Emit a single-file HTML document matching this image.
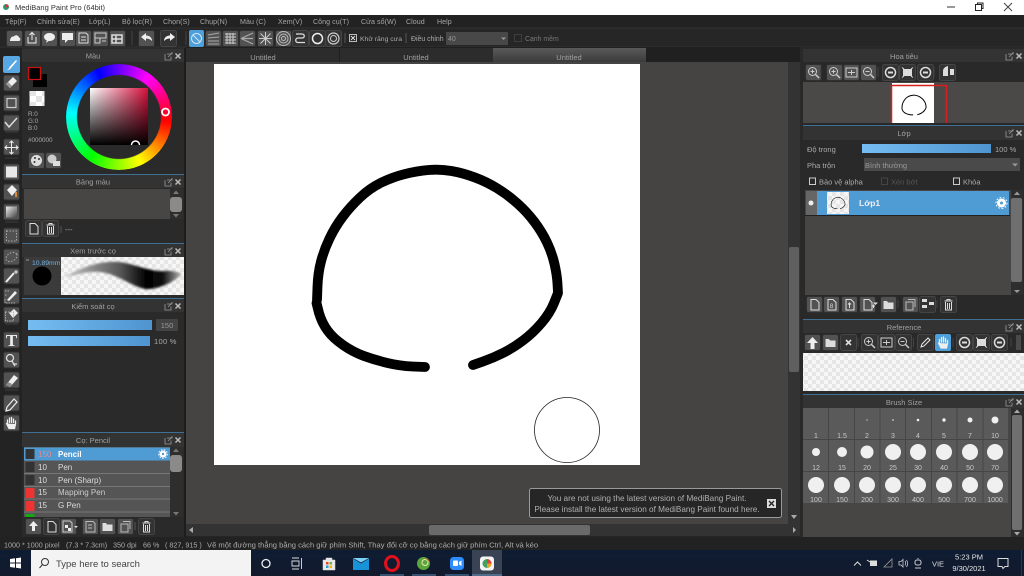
<!DOCTYPE html>
<html><head><meta charset="utf-8"><title>MediBang Paint Pro</title>
<style>
html,body{margin:0;padding:0;background:#222;width:1024px;height:576px;overflow:hidden}
#root{position:absolute;left:0;top:0;width:1024px;height:576px;overflow:hidden;filter:blur(.3px)}
svg{position:absolute;left:0;top:0;display:block}
text{font-family:"Liberation Sans","Noto Sans CJK SC",sans-serif;font-size:7.5px;fill:#aaa}
.h{text-anchor:middle;fill:#a0a0a0}
.m{font-size:7.1px;fill:#a5a5a5;letter-spacing:.05px}
.n{font-size:7px;fill:#c8c8c8;text-anchor:middle}
.wheel{position:absolute;left:66px;top:64px;width:106px;height:106px;border-radius:50%;background:conic-gradient(from 95deg,#f00,#ff0,#0f0,#0ff,#00f,#f0f,#f00);-webkit-mask:radial-gradient(circle,transparent 41.5px,#000 42.5px);mask:radial-gradient(circle,transparent 41.5px,#000 42.5px)}
.sv{position:absolute;left:90px;top:88px;width:58px;height:57px;background:linear-gradient(to top,#000,rgba(0,0,0,0)),linear-gradient(to right,#fff,#d8103c)}
.over{position:absolute;left:0;top:0;width:1024px;height:576px}
</style></head><body><div id="root">
<svg width="1024" height="576" viewBox="0 0 1024 576" xmlns="http://www.w3.org/2000/svg">
<defs>
<pattern id="ck" width="12" height="12" patternUnits="userSpaceOnUse"><rect width="12" height="12" fill="#fff"/><rect width="6" height="6" fill="#e4e4e4"/><rect x="6" y="6" width="6" height="6" fill="#e4e4e4"/></pattern>
<pattern id="ck2" width="8" height="8" patternUnits="userSpaceOnUse"><rect width="8" height="8" fill="#f6f6f6"/><rect width="4" height="4" fill="#e6e6e6"/><rect x="4" y="4" width="4" height="4" fill="#e6e6e6"/></pattern>
<linearGradient id="sl" x1="0" x2="1" y1="0" y2="0"><stop offset="0" stop-color="#74bdf2"/><stop offset="1" stop-color="#4f94cf"/></linearGradient>
<linearGradient id="tab" x1="0" x2="0" y1="0" y2="1"><stop offset="0" stop-color="#5a5a5a"/><stop offset="1" stop-color="#3b3b3b"/></linearGradient>
<linearGradient id="tb" x1="0" x2="0" y1="0" y2="1"><stop offset="0" stop-color="#0e1c33"/><stop offset="1" stop-color="#121a2c"/></linearGradient>
<linearGradient id="gr" x1="0" x2="1" y1="0" y2="1"><stop offset="0" stop-color="#eee"/><stop offset="1" stop-color="#444"/></linearGradient>
<linearGradient id="st" x1="0" x2="1" y1="0" y2="0"><stop offset="0" stop-color="#ccc"/><stop offset=".25" stop-color="#888"/><stop offset=".48" stop-color="#555"/><stop offset=".7" stop-color="#000"/><stop offset=".84" stop-color="#111"/><stop offset="1" stop-color="#bbb"/></linearGradient>
<filter id="bl"><feGaussianBlur stdDeviation="1"/></filter>
<path id="curve" fill="none" stroke="#000" stroke-linecap="round" stroke-linejoin="round" stroke-width="9.8" d="M425 367L412.500 366.500Q400 366 387.500 363Q375 360 364 356Q353 352 343 345Q333 338 327.500 330.500Q322 323 319 313L316.500 303M317 300L317.500 286.500Q318 273 321 261.500Q324 250 329.500 238.500Q335 227 342.500 217Q350 207 360 197.500Q370 188 381.500 182.500Q393 177 405 174Q417 171 428.500 170Q440 169 451.500 171Q463 173 475 177.500Q487 182 497.500 188.500Q508 195 517.500 203.500Q527 212 534.500 222Q542 232 547 242.500Q552 253 554.500 264Q557 275 557.500 284L558 293L554 303Q550 313 541.500 323Q533 333 523 340.500Q513 348 503 353Q493 358 483 361.500L473 365"/>
<g id="b"><rect x=".5" y=".5" width="16" height="16" rx="2" fill="#525252" stroke="#2f2f2f"/></g>
<g id="bd"><rect x=".5" y=".5" width="16" height="16" rx="2" fill="#333" stroke="#454545"/></g>
<g id="hdr"><path d="M1 2V8H7V4.500M3 2H8V0M4 5L8 1" fill="none" stroke="#999" stroke-width=".8"/><path d="M11.500 1.500L16.500 6.500M16.500 1.500L11.500 6.500" stroke="#bbb" stroke-width="1.500"/></g>
<g id="newp"><path d="M5 3.500H10L13 6.500V14H5Z" fill="none" stroke="#ddd"/></g>
<g id="trash"><path d="M4.500 5H12.500M7 5V3.500H10V5M5.500 6V14H11.500V6M7.500 7V13M9.500 7V13" fill="none" stroke="#ddd"/></g>
<g id="folder"><path d="M3.500 5H7L8 6.500H13.500V13H3.500Z" fill="#ddd"/></g>
<g id="copy"><path d="M6 3.500H13V11M4 6H11V14H4Z" fill="none" stroke="#bbb"/></g>
<g id="zi"><circle cx="7.500" cy="7.500" r="4" fill="none" stroke="#ccc"/><path d="M10.500 10.500L14 14" stroke="#ccc" stroke-width="1.500"/><path d="M5.500 7.500H9.500M7.500 5.500V9.500" stroke="#ccc"/></g>
<g id="zo"><circle cx="7.500" cy="7.500" r="4" fill="none" stroke="#ccc"/><path d="M10.500 10.500L14 14" stroke="#ccc" stroke-width="1.500"/><path d="M5.500 7.500H9.500" stroke="#ccc"/></g>
<g id="fit"><rect x="3" y="4" width="11" height="9" fill="none" stroke="#ccc"/><path d="M5 8.500H12M8.500 6V11" stroke="#ccc"/></g>
<g id="rot"><circle cx="8.500" cy="8.500" r="5" fill="none" stroke="#ddd" stroke-width="1.500"/><path d="M6 8.500H11" stroke="#ddd" stroke-width="2"/></g>
<g id="flip"><rect x="4" y="5" width="9" height="7" fill="#ddd"/><path d="M3 3.500L5 5M14 3.500L12 5M3 13.500L5 12M14 13.500L12 12" stroke="#ddd"/></g>
<g id="hand"><path d="M5 9V5.500M7 8V3.500M9 8V3M11 8V4.500M13 9.500V6.500M4 9L6.500 14H12L13 9.500" stroke="#eee" fill="#eee" stroke-width="1.300" stroke-linecap="round"/></g>
</defs>

<!-- base -->
<rect width="1024" height="576" fill="#252525"/>
<rect width="1024" height="15" fill="#fff"/>
<rect y="15" width="1024" height="13" fill="#222"/>
<rect y="28" width="1024" height="19" fill="#262626"/>
<path d="M0 28H1024M0 47H1024" stroke="#333"/>

<!-- title -->
<circle cx="6" cy="7" r="3" fill="#2b9a6a"/><circle cx="7" cy="6" r="1.500" fill="#d33"/>
<text x="15" y="10" style="font-size:7.500px;fill:#333">MediBang Paint Pro (64bit)</text>
<path d="M947 7H955" stroke="#333"/>
<path d="M975.500 4.500H981.500V10.500H975.500ZM977.500 4.500V3H983V8.500H981.500" fill="#fff" stroke="#222"/>
<path d="M1004 3L1012 11M1012 3L1004 11" stroke="#444"/>

<!-- menu -->
<text class="m" x="5" y="24">Tệp(F)</text><text class="m" x="37" y="24">Chỉnh sửa(E)</text><text class="m" x="89" y="24">Lớp(L)</text><text class="m" x="122" y="24">Bộ lọc(R)</text><text class="m" x="163" y="24">Chọn(S)</text><text class="m" x="200" y="24">Chụp(N)</text><text class="m" x="240" y="24">Màu (C)</text><text class="m" x="278" y="24">Xem(V)</text><text class="m" x="313" y="24">Công cụ(T)</text><text class="m" x="361" y="24">Cửa sổ(W)</text><text class="m" x="406" y="24">Cloud</text><text class="m" x="437" y="24">Help</text>

<!-- toolbar -->
<g>
<use href="#b" x="6" y="30"/><path d="M10 41H19C20.500 41 21 38 19 37.500C18.500 35 15 34.500 14 36.500C12 36 10 38 10 41Z" fill="#eee"/>
<use href="#b" x="24" y="30"/><path d="M28 37V43H36V37M32 40V33M29.500 35L32 32.500L34.500 35" fill="none" stroke="#eee"/>
<use href="#b" x="41" y="30"/><ellipse cx="49.500" cy="37" rx="5.500" ry="4" fill="#eee"/><path d="M47 40L46 43L50 40Z" fill="#eee"/>
<use href="#b" x="59" y="30"/><rect x="62" y="33" width="11" height="7" fill="#eee"/><path d="M65 40V43L68 40Z" fill="#eee"/>
<use href="#b" x="75" y="30"/><path d="M79 33H86L88 35V43H79ZM81 37H86M81 40H86" fill="none" stroke="#ddd"/>
<use href="#b" x="92" y="30"/><path d="M95 33H106V38H95ZM95 38V43H100V38M102 41H106" fill="none" stroke="#ccc"/>
<use href="#b" x="109" y="30"/><path d="M112 35H122V43H112ZM116 35V43M112 39H122" fill="none" stroke="#ddd" stroke-width="1.500"/>
<path d="M132 31V45" stroke="#444"/>
<use href="#b" x="138" y="30"/><path d="M141 37L146 33V35.500C150 35.500 152 38 152 41C150 39 148 38.500 146 38.500V41Z" fill="#eee"/>
<use href="#bd" x="160" y="30"/><path d="M175 37L170 33V35.500C166 35.500 164 38 164 41C166 39 168 38.500 170 38.500V41Z" fill="#eee"/>
<path d="M186 31V45" stroke="#444"/>
<rect x="189" y="30" width="15" height="17" rx="2" fill="#4f9fdb"/><circle cx="196.500" cy="38.500" r="5" fill="none" stroke="#cfe6f7"/><path d="M193 35L200 42" stroke="#cfe6f7"/>
<use href="#b" x="205" y="30"/><path d="M208 35L219 33M208 38L219 37M208 41L219 41M208 44L219 44" stroke="#aaa"/>
<use href="#b" x="222" y="30"/><path d="M225 34H236M225 37H236M225 40H236M225 43H236M227 33V44M230 33V44M233 33V44" stroke="#ccc"/>
<use href="#b" x="239" y="30"/><path d="M241 38.500L253 33M241 38.500L253 38.500M241 38.500L253 44" stroke="#aaa" stroke-width="1.200"/>
<use href="#b" x="257" y="30"/><path d="M259 38.500H272M265.500 32V45M260.500 33.500L270.500 43.500M270.500 33.500L260.500 43.500" stroke="#ccc"/>
<use href="#b" x="275" y="30"/><circle cx="283.500" cy="38.500" r="2" fill="none" stroke="#bbb"/><circle cx="283.500" cy="38.500" r="4.500" fill="none" stroke="#bbb"/><circle cx="283.500" cy="38.500" r="7" fill="none" stroke="#bbb"/>
<use href="#bd" x="292" y="30"/><path d="M296 34H302C305 34 305 38 302 38H298C295 38 295 42.500 298 42.500H305" fill="none" stroke="#ddd" stroke-width="1.300"/>
<use href="#bd" x="309" y="30"/><circle cx="317.500" cy="38.500" r="5" fill="none" stroke="#eee" stroke-width="1.500"/>
<use href="#bd" x="325" y="30"/><circle cx="333.500" cy="38.500" r="5.500" fill="none" stroke="#ccc" stroke-width="1.200"/><circle cx="333.500" cy="38.500" r="3" fill="none" stroke="#ccc"/>
<path d="M345 33V43" stroke="#555"/>
<rect x="349.500" y="34.500" width="7" height="7" fill="none" stroke="#bbb"/><path d="M351 36L355 40M355 36L351 40" stroke="#ddd"/>
<text x="360" y="41" style="font-size:6.800px">Khử răng cưa</text>
<path d="M406 33V43" stroke="#555"/>
<text x="411" y="41" style="font-size:6.900px">Điều chỉnh</text>
<rect x="446" y="32" width="62" height="13" fill="#484848"/><text x="448" y="41" style="fill:#999;font-size:7px">40</text><path d="M501 37.500H506L503.500 40Z" fill="#999"/>
<rect x="514.500" y="34.500" width="7" height="7" fill="none" stroke="#3e3e3e"/>
<text x="525" y="41" style="fill:#777;font-size:6.900px">Cạnh mềm</text>
</g>

<!-- tabs + canvas area -->
<rect x="186" y="47" width="614" height="15" fill="#202020"/>
<rect x="186" y="48" width="153" height="14" fill="#2c2c2c"/>
<rect x="340" y="48" width="153" height="14" fill="#2c2c2c"/>
<rect x="493" y="48" width="153" height="14" fill="url(#tab)"/>
<text class="h" x="263" y="60">Untitled</text><text class="h" x="416" y="60">Untitled</text><text class="h" x="569" y="60">Untitled</text>
<rect x="186" y="62" width="602" height="462" fill="#454443"/>
<rect x="214" y="64" width="426" height="401" fill="#fff"/>
<use href="#curve"/>
<circle cx="567" cy="430" r="32.500" fill="none" stroke="#222" stroke-width=".8"/>
<rect x="788" y="62" width="12" height="474" fill="#333"/><rect x="789" y="247" width="10" height="125" rx="2" fill="#5f5f5f"/>
<path d="M791 515H797L794 519Z" fill="#aaa"/><path d="M793 527V533L796 530Z" fill="#aaa"/>
<rect x="186" y="524" width="602" height="12" fill="#333"/><rect x="429" y="525" width="161" height="10" rx="2" fill="#6a6a6a"/>
<path d="M193 527V533L189 530Z" fill="#aaa"/>

<!-- notification -->
<rect x="529.500" y="488.500" width="252" height="29" rx="2" fill="#262626" stroke="#9a9a9a"/>
<text x="647" y="501" text-anchor="middle" style="font-size:8.200px;fill:#b0b0b0">You are not using the latest version of MediBang Paint.</text>
<text x="647" y="512" text-anchor="middle" style="font-size:8.200px;fill:#b0b0b0">Please install the latest version of MediBang Paint found here.</text>
<rect x="767" y="499" width="9" height="9" fill="#ddd"/><path d="M769 501L774 506M774 501L769 506" stroke="#222" stroke-width="1.300"/>

<!-- left tools -->
<rect x="0" y="48" width="22" height="490" fill="#232323"/>
<rect x="3" y="56" width="17" height="17" rx="2" fill="#58a6e2"/><path d="M6 70C8 70 9 69 9.500 67L16 60L17 61L11 68C10 69.500 8 70.500 6 70Z" fill="#fff"/>
<use href="#b" x="3" y="74.500"/><path d="M6 84L13 77L17 81L10 88Z" fill="#eee"/><path d="M6 84L10 88L12 86L8 82Z" fill="#999"/>
<use href="#b" x="3" y="94.500"/><rect x="7" y="98.500" width="9" height="9" fill="none" stroke="#ccc" stroke-width="1.200"/>
<use href="#b" x="3" y="114.500"/><path d="M5 122L9 127L17 118" fill="none" stroke="#ddd" stroke-width="1.500"/>
<use href="#b" x="3" y="138.500"/><path d="M11.500 141V154M5 147.500H18M9.500 143L11.500 141L13.500 143M9.500 152L11.500 154L13.500 152M7 145.500L5 147.500L7 149.500M16 145.500L18 147.500L16 149.500" fill="none" stroke="#eee"/>
<use href="#b" x="3" y="163.500"/><rect x="6" y="166.500" width="11" height="11" fill="#e8e8e8"/>
<use href="#b" x="3" y="183.500"/><path d="M7 190L12 185L17 190L12 196Z" fill="#eee"/><path d="M16 192V197" stroke="#d98a3a" stroke-width="2"/>
<use href="#b" x="3" y="203.500"/><rect x="6" y="206.500" width="11" height="11" fill="url(#gr)"/>
<use href="#b" x="3" y="227.500"/><rect x="6.500" y="231" width="10" height="10" fill="none" stroke="#aaa" stroke-dasharray="1.500 1.500"/>
<use href="#b" x="3" y="248.500"/><ellipse cx="11.500" cy="257" rx="6" ry="4" transform="rotate(-30 11.500 257)" fill="none" stroke="#aaa" stroke-dasharray="1.500 1.500"/>
<use href="#b" x="3" y="267.500"/><path d="M6 282L14 273" stroke="#eee" stroke-width="2"/><path d="M16 270V274M14 272H18" stroke="#eee"/>
<use href="#b" x="3" y="287.500"/><path d="M7 300L15 291L17 293L9 301Z" fill="#eee"/><path d="M5 291H10M5 295H7M5 299V303H15" fill="none" stroke="#aaa" stroke-dasharray="1.500 1"/>
<use href="#b" x="3" y="306.500"/><path d="M9 313L14 309L18 313L13 318Z" fill="#eee"/><rect x="5.500" y="312" width="8" height="9" fill="none" stroke="#aaa" stroke-dasharray="1.500 1"/>
<use href="#b" x="3" y="331.500"/><text x="11.500" y="346" text-anchor="middle" style="font-size:17px;font-weight:bold;fill:#f0f0f0;font-family:'Liberation Serif',serif">T</text>
<use href="#b" x="3" y="351.500"/><circle cx="10" cy="358" r="3.500" fill="none" stroke="#ddd" stroke-width="1.300"/><path d="M12 361L15 366M13 364H17" stroke="#ddd" stroke-width="1.300"/>
<use href="#b" x="3" y="371.500"/><path d="M6 385L14 375L18 378L10 387Z" fill="#eee"/><path d="M6 385L10 387L12 384L8 382Z" fill="#888"/>
<use href="#b" x="3" y="394.500"/><path d="M6 411L7 407L14 399L17 402L10 410Z" fill="none" stroke="#eee" stroke-width="1.200"/>
<use href="#b" x="3" y="414.500"/><use href="#hand" transform="translate(2.500 414.500)"/>
<path d="M5 132H18M5 158H18M5 222H18M5 324H18M5 390H18" stroke="#3c3c3c"/>

<!-- left panels -->
<rect x="22" y="48" width="162" height="490" fill="#2a2a2a"/>
<rect x="184" y="48" width="2" height="490" fill="#1d1d1d"/>
<rect x="22" y="49" width="162" height="13" fill="#333"/><text class="h" x="93" y="58.500">Màu</text><use href="#hdr" x="164" y="52"/>
<rect x="33" y="74" width="14" height="13" fill="#000"/>
<rect x="28.500" y="67.500" width="12" height="12" fill="#000" stroke="#c11" stroke-width="1.200"/>
<rect x="29.500" y="91" width="15" height="15" fill="url(#ck)"/>
<text x="28" y="116" style="font-size:6.300px">R:0</text><text x="28" y="123" style="font-size:6.300px">G:0</text><text x="28" y="130" style="font-size:6.300px">B:0</text>
<text x="28" y="142" style="font-size:6.300px">#000000</text>
<use href="#b" x="28" y="152"/><circle cx="36.500" cy="160.500" r="5.500" fill="#ddd"/><circle cx="35" cy="158" r="1" fill="#333"/><circle cx="39" cy="159" r="1" fill="#333"/><circle cx="34.500" cy="162" r="1" fill="#333"/>
<use href="#b" x="45" y="152"/><circle cx="52" cy="159" r="4.500" fill="#ccc"/><rect x="53" y="161" width="7" height="5" fill="#ddd"/>

<path d="M22 174.500H184" stroke="#3f6f92"/>
<rect x="22" y="175" width="162" height="13" fill="#333"/><text class="h" x="93" y="184.500">Bảng màu</text><use href="#hdr" x="164" y="178"/>
<rect x="24" y="189" width="146" height="30" fill="#474645"/>
<rect x="170" y="189" width="13" height="30" fill="#2e2e2e"/><path d="M176 190.500L179 194H173Z" fill="#777"/><rect x="170" y="197" width="12" height="15" rx="3" fill="#8a8a8a"/><path d="M173 214H179L176 217.500Z" fill="#777"/>
<use href="#bd" x="25" y="220"/><use href="#newp" x="25" y="220"/>
<use href="#bd" x="42" y="220"/><use href="#trash" x="42" y="220"/>
<path d="M61 226V233" stroke="#555"/><text x="65" y="232">---</text>

<path d="M22 243.500H184" stroke="#3f6f92"/>
<rect x="22" y="244" width="162" height="13" fill="#333"/><text class="h" x="93" y="253.500">Xem trước cọ</text><use href="#hdr" x="164" y="247"/>
<rect x="24" y="257" width="37" height="38" fill="#3b3b3b"/>
<path d="M26 260H29" stroke="#999"/>
<text x="32" y="265" style="fill:#6fb0e0;font-size:6.800px">10.89mm</text>
<circle cx="42" cy="276" r="9.500" fill="#000"/>
<rect x="61" y="257" width="123" height="38" fill="url(#ck2)"/>
<path d="M64 277C80 268 100 260 120 262C135 264 150 272 165 271C170 270 178 272 182 274C172 284 155 290 145 289C130 286 118 274 100 272C85 271 75 276 64 277Z" fill="url(#st)" filter="url(#bl)"/>

<path d="M22 298.500H184" stroke="#3f6f92"/>
<rect x="22" y="299" width="162" height="13" fill="#333"/><text class="h" x="93" y="309">Kiểm soát cọ</text><use href="#hdr" x="164" y="302"/>
<rect x="28" y="320" width="124" height="10" fill="url(#sl)"/>
<rect x="156" y="319" width="22" height="12" rx="1" fill="#444"/><text x="167" y="328" text-anchor="middle" style="font-size:7.500px;fill:#999">150</text>
<rect x="28" y="336" width="122" height="10" fill="url(#sl)"/>
<text x="154" y="344" style="font-size:7.500px;fill:#aaa;letter-spacing:.3px">100 %</text>

<path d="M22 432.500H184" stroke="#3f6f92"/>
<rect x="22" y="433" width="162" height="14" fill="#333"/><text class="h" x="93" y="443">Cọ: Pencil</text><use href="#hdr" x="164" y="436"/>
<rect x="24" y="447" width="146" height="70" fill="#555"/>
<rect x="24" y="447.500" width="146" height="13" fill="#4f9bd3"/>
<path d="M24 473.500H170M24 486.500H170M24 499H170M24 512H170" stroke="#777"/>
<rect x="25.500" y="449" width="9" height="10" fill="#333"/><rect x="25.500" y="462" width="9" height="10" fill="#333"/><rect x="25.500" y="475" width="9" height="10" fill="#333"/><rect x="25.500" y="488" width="9" height="10" fill="#e33"/><rect x="25.500" y="501" width="9" height="10" fill="#e33"/><rect x="25.500" y="514" width="9" height="3" fill="#1a1"/>
<text x="38" y="457" style="font-size:8px;fill:#e88">150</text><text x="58" y="457" style="font-size:8px;fill:#fff;font-weight:bold">Pencil</text>
<text x="38" y="470" style="font-size:8px;fill:#ddd">10</text><text x="58" y="470" style="font-size:8px;fill:#ddd">Pen</text>
<text x="38" y="483" style="font-size:8px;fill:#ddd">10</text><text x="58" y="483" style="font-size:8px;fill:#ddd">Pen (Sharp)</text>
<text x="38" y="495" style="font-size:8px;fill:#ddd">15</text><text x="58" y="495" style="font-size:8px;fill:#ccc">Mapping Pen</text>
<text x="38" y="508" style="font-size:8px;fill:#ddd">15</text><text x="58" y="508" style="font-size:8px;fill:#ddd">G Pen</text>
<circle cx="163" cy="454" r="3.500" fill="#fff"/><circle cx="163" cy="454" r="1.200" fill="#4f9bd3"/><circle cx="163" cy="454" r="4.300" fill="none" stroke="#fff" stroke-dasharray="1.500 1.500"/>
<rect x="170" y="447" width="13" height="70" fill="#2e2e2e"/><path d="M176 448.500L179 452H173Z" fill="#777"/><rect x="170" y="455" width="12" height="17" rx="3" fill="#8a8a8a"/><path d="M173 512H179L176 515.500Z" fill="#777"/>
<use href="#b" x="25" y="518"/><path d="M33.500 521L29 526H32V531H35V526H38Z" fill="#eee"/>
<use href="#bd" x="43" y="518"/><use href="#newp" x="43" y="518"/>
<use href="#b" x="60" y="518"/><path d="M63 521H70L72 523V532H63Z" fill="none" stroke="#ccc"/><rect x="65" y="525" width="3" height="3" fill="#eee"/><rect x="68" y="528" width="3" height="3" fill="#eee"/><path d="M74 526H78L76 528Z" fill="#ddd"/>
<use href="#b" x="82" y="518"/><path d="M86 521.500H93L95 523.500V532H86ZM88 525H92M88 528H92" fill="none" stroke="#bbb"/>
<use href="#b" x="99" y="518"/><use href="#folder" x="99" y="518"/>
<use href="#b" x="117" y="518"/><use href="#copy" x="117" y="518"/>
<path d="M135 522V530" stroke="#555"/>
<use href="#bd" x="138" y="518"/><use href="#trash" x="138" y="518"/>

<!-- status -->
<rect y="537" width="1024" height="13" fill="#222"/>
<text x="4" y="547.500" style="font-size:7.200px;fill:#aaa">1000 * 1000 pixel</text>
<text x="66" y="547.500" style="font-size:7.200px;fill:#aaa">(7.3 * 7.3cm)</text>
<text x="113" y="547.500" style="font-size:7.200px;fill:#aaa">350 dpi</text>
<text x="143" y="547.500" style="font-size:7.200px;fill:#aaa">66 %</text>
<text x="165" y="547.500" style="font-size:7.200px;fill:#aaa">( 827, 915 )</text>
<text x="207" y="547.500" style="font-size:7.600px;fill:#aaa">Vẽ một đường thẳng bằng cách giữ phím Shift, Thay đổi cỡ cọ bằng cách giữ phím Ctrl, Alt và kéo</text>

<!-- right panels -->
<rect x="800" y="47" width="224" height="490" fill="#292929"/>
<rect x="803" y="49" width="221" height="13" fill="#333"/><text class="h" x="904" y="59">Hoa tiêu</text><use href="#hdr" x="1005" y="52"/>
<use href="#b" x="805" y="64"/><use href="#zi" x="805" y="64"/>
<use href="#b" x="826" y="64"/><use href="#zi" x="826" y="64"/>
<use href="#b" x="843" y="64"/><use href="#fit" x="843" y="64"/>
<use href="#b" x="860" y="64"/><use href="#zo" x="860" y="64"/>
<use href="#bd" x="882" y="64"/><use href="#rot" x="882" y="64"/>
<use href="#bd" x="899" y="64"/><use href="#flip" x="899" y="64"/>
<use href="#bd" x="917" y="64"/><use href="#rot" x="917" y="64"/>
<use href="#bd" x="939" y="64"/><path d="M943 74V71C943 67 948 66 948 66V76H943ZM950 69H954V75H950Z" fill="#ddd"/>
<path d="M820.500 67V77M878 67V77M934 67V77" stroke="#444"/>
<rect x="803" y="82" width="221" height="41" fill="#4a4948"/>
<rect x="892" y="83" width="42" height="40" fill="#fff"/>
<path d="M892 85.500H946.500V123M891.500 85V123" fill="none" stroke="#d81e1e" stroke-width="1.500"/>
<g transform="translate(870.300 78.200) scale(.1)"><use href="#curve"/></g>

<path d="M803 125.500H1024" stroke="#3f6f92"/>
<rect x="803" y="126" width="221" height="14" fill="#333"/><text class="h" x="904" y="136">Lớp</text><use href="#hdr" x="1005" y="129"/>
<text x="807" y="152">Độ trong</text>
<rect x="862" y="144" width="129" height="9" fill="url(#sl)"/>
<text x="995" y="152" style="fill:#aaa">100 %</text>
<text x="807" y="168">Pha trộn</text>
<rect x="864" y="158" width="156" height="13" fill="#4a4a4a"/><text x="865" y="168" style="fill:#999">Bình thường</text><path d="M1012 163.500H1018L1015 166.500Z" fill="#999"/>
<rect x="809.500" y="178" width="6" height="6.500" fill="none" stroke="#ccc"/><text x="819" y="184.500">Bảo vệ alpha</text>
<rect x="881.500" y="178" width="6" height="6.500" fill="none" stroke="#444"/><text x="891" y="184.500" style="fill:#555">Xén bớt</text>
<rect x="953.500" y="178" width="6" height="6.500" fill="none" stroke="#ccc"/><text x="963" y="184.500">Khóa</text>
<rect x="805" y="190" width="206" height="105" fill="#474645"/>
<rect x="806" y="191" width="11" height="24" fill="#666"/><circle cx="811" cy="203" r="2.500" fill="#eee"/>
<rect x="817" y="191" width="192" height="24" fill="#4f9bd3"/>
<path d="M805 215.500H1010" stroke="#222"/>
<rect x="827" y="192" width="22" height="22" fill="url(#ck2)"/>
<g transform="translate(812.700 187.500) scale(.058)"><use href="#curve"/></g>
<text x="859" y="206" style="font-size:8.500px;font-weight:bold;fill:#eee">Lớp1</text>
<circle cx="1001.500" cy="203" r="4.500" fill="#fff"/><circle cx="1001.500" cy="203" r="1.500" fill="#4f9bd3"/><circle cx="1001.500" cy="203" r="5.500" fill="none" stroke="#fff" stroke-dasharray="1.700 1.700"/>
<rect x="1011" y="190" width="12" height="105" fill="#2e2e2e"/><rect x="1011" y="198" width="11" height="84" rx="2" fill="#6f6f6f"/><path d="M1014 290H1020L1017 293Z" fill="#999"/><path d="M1017 191.500L1020 195H1014Z" fill="#999"/>
<use href="#b" x="806" y="296"/><use href="#newp" x="806" y="296"/>
<use href="#b" x="823" y="296"/><use href="#newp" x="823" y="296"/><text x="831.500" y="308" text-anchor="middle" style="font-size:6px;fill:#ddd">8</text>
<use href="#b" x="841" y="296"/><use href="#newp" x="841" y="296"/><path d="M849.500 308V303M848 304.500L849.500 303L851 304.500" stroke="#ddd" fill="none"/>
<use href="#b" x="859" y="296"/><use href="#newp" x="859" y="296"/><path d="M872 306H875M873.500 304.500V308" stroke="#ddd"/><path d="M873 302.500H878L875.500 305Z" fill="#ddd"/>
<use href="#b" x="880" y="296"/><use href="#folder" x="880" y="296"/>
<use href="#b" x="902" y="296"/><use href="#copy" x="902" y="296"/>
<use href="#bd" x="919" y="296"/><path d="M922 299H927V302H922ZM922 305H927V308H922ZM929 302H934V305H929Z" fill="#ddd"/>
<use href="#bd" x="940" y="296"/><use href="#trash" x="940" y="296"/>
<path d="M898 300V308M937 300V308" stroke="#444"/>

<path d="M803 319.500H1024" stroke="#3f6f92"/>
<rect x="803" y="320" width="221" height="13" fill="#333"/><text class="h" x="904" y="330">Reference</text><use href="#hdr" x="1005" y="323"/>
<use href="#b" x="804" y="334"/><path d="M812.500 337L807 343H810.500V349H814.500V343H818Z" fill="#eee"/>
<use href="#b" x="822" y="334"/><use href="#folder" x="822" y="334"/>
<use href="#bd" x="840" y="334"/><path d="M846 340L851 345M851 340L846 345" stroke="#ddd" stroke-width="1.600"/>
<use href="#bd" x="861" y="334"/><use href="#zi" x="861" y="334"/>
<use href="#bd" x="878" y="334"/><use href="#fit" x="878" y="334"/>
<use href="#bd" x="895" y="334"/><use href="#zo" x="895" y="334"/>
<use href="#bd" x="917" y="334"/><path d="M921 347L922 344L928 338L930 340L924 346Z" fill="none" stroke="#eee"/>
<rect x="935" y="334" width="16" height="17" rx="2" fill="#4f9fdb"/><use href="#hand" transform="translate(934.500 334)"/>
<use href="#bd" x="956" y="334"/><use href="#rot" x="956" y="334"/>
<use href="#bd" x="973" y="334"/><use href="#flip" x="973" y="334"/>
<use href="#bd" x="991" y="334"/><use href="#rot" x="991" y="334"/>
<rect x="1016" y="335" width="5" height="15" fill="#4a4a4a"/>
<path d="M858 338V347M913.500 338V347M953 338V347M1011 338V347" stroke="#444"/>
<rect x="803" y="353" width="221" height="38" fill="url(#ck2)"/>

<path d="M803 394.500H1024" stroke="#3f6f92"/>
<rect x="803" y="395" width="221" height="13" fill="#333"/><text class="h" x="904" y="405">Brush Size</text><use href="#hdr" x="1005" y="398"/>
<rect x="803" y="408" width="208" height="129" fill="#474645"/>
<rect x="803" y="408" width="205" height="95" fill="#5a5a5a"/>
<path d="M803 439.500H1008M803 471.500H1008M828.500 408V503M854.500 408V503M880 408V503M905.500 408V503M931.500 408V503M957 408V503M983 408V503" stroke="#474645"/>
<g fill="#f0f0f0">
<circle cx="867" cy="420" r=".6"/><circle cx="893" cy="420" r=".8"/><circle cx="918" cy="420" r="1.300"/><circle cx="944" cy="420" r="1.700"/><circle cx="970" cy="420" r="2.500"/><circle cx="995" cy="420" r="3.500"/>
<circle cx="816" cy="452" r="4"/><circle cx="842" cy="452" r="5"/><circle cx="867" cy="452" r="6.500"/><circle cx="893" cy="452" r="8"/><circle cx="918" cy="452" r="8"/><circle cx="944" cy="452" r="8"/><circle cx="970" cy="452" r="8"/><circle cx="995" cy="452" r="8"/>
<circle cx="816" cy="485" r="8"/><circle cx="842" cy="485" r="8"/><circle cx="867" cy="485" r="8"/><circle cx="893" cy="485" r="8"/><circle cx="918" cy="485" r="8"/><circle cx="944" cy="485" r="8"/><circle cx="970" cy="485" r="8"/><circle cx="995" cy="485" r="8"/>
</g>
<text class="n" x="816" y="438">1</text><text class="n" x="842" y="438">1.5</text><text class="n" x="867" y="438">2</text><text class="n" x="893" y="438">3</text><text class="n" x="918" y="438">4</text><text class="n" x="944" y="438">5</text><text class="n" x="970" y="438">7</text><text class="n" x="995" y="438">10</text>
<text class="n" x="816" y="470">12</text><text class="n" x="842" y="470">15</text><text class="n" x="867" y="470">20</text><text class="n" x="893" y="470">25</text><text class="n" x="918" y="470">30</text><text class="n" x="944" y="470">40</text><text class="n" x="970" y="470">50</text><text class="n" x="995" y="470">70</text>
<text class="n" x="816" y="502">100</text><text class="n" x="842" y="502">150</text><text class="n" x="867" y="502">200</text><text class="n" x="893" y="502">300</text><text class="n" x="918" y="502">400</text><text class="n" x="944" y="502">500</text><text class="n" x="970" y="502">700</text><text class="n" x="995" y="502">1000</text>
<rect x="1011" y="408" width="12" height="129" fill="#2e2e2e"/><rect x="1012" y="415" width="10" height="115" rx="2" fill="#6f6f6f"/><path d="M1017 409.500L1020 413H1014Z" fill="#aaa"/><path d="M1014 532H1020L1017 535.500Z" fill="#aaa"/>

<!-- taskbar -->
<rect y="550" width="1024" height="26" fill="url(#tb)"/>
<path d="M10 559L15 558.300V562.500H10ZM16 558.200L21 557.500V562.500H16ZM10 563.500H15V567.700L10 567ZM16 563.500H21V568.500L16 567.800Z" fill="#fff"/>
<rect x="31" y="550" width="220" height="26" fill="#f3f3f3"/>
<circle cx="45" cy="562" r="3.500" fill="none" stroke="#333"/><path d="M42.500 564.500L39.500 568" stroke="#333"/>
<text x="56" y="567" style="font-size:9.500px;fill:#444">Type here to search</text>
<circle cx="266" cy="563.500" r="4" fill="none" stroke="#eee" stroke-width="1.300"/>
<path d="M292 558H299M292 561V566H299V561ZM292 569H299M301.500 558V569" fill="none" stroke="#ddd" stroke-width=".9"/>
<path d="M323 560H335V570H323ZM326 560V558H332V560" fill="#e8e8e8" stroke="#ddd" stroke-width=".5"/><rect x="326" y="562" width="2.500" height="2.500" fill="#e8462a"/><rect x="329.500" y="562" width="2.500" height="2.500" fill="#6cb33f"/><rect x="326" y="565.500" width="2.500" height="2.500" fill="#2a9fd6"/><rect x="329.500" y="565.500" width="2.500" height="2.500" fill="#f7b900"/>
<path d="M353 558.500L361 563.500L369 558.500V570H353Z" fill="#1893d8"/><path d="M353 558L361 562.500L369 558Z" fill="#7dd0f5"/>
<ellipse cx="392" cy="563.500" rx="6.500" ry="7" fill="none" stroke="#e0101c" stroke-width="3"/>
<circle cx="423.500" cy="563.500" r="6.500" fill="#5aa83c"/><circle cx="425" cy="562.500" r="3" fill="none" stroke="#e8e8b0"/><path d="M425 558L429 561" stroke="#e05a3a"/>
<rect x="450" y="557" width="14" height="13" rx="3.500" fill="#2d8cff"/><rect x="453" y="560.500" width="5" height="5.500" rx="1" fill="#fff"/><path d="M459 562L461.500 560.500V566L459 564.500Z" fill="#fff"/>
<rect x="472" y="550" width="30" height="26" fill="#3a4354"/>
<rect x="480" y="556.500" width="14" height="14" rx="3" fill="#f4f4f4"/><circle cx="487" cy="563.500" r="4.500" fill="#3da35d"/><path d="M487 563.500V559A4.500 4.500 0 0 1 491.500 563.500Z" fill="#e04040"/><path d="M487 563.500H491.500A4.500 4.500 0 0 1 487 568Z" fill="#f0a020"/>
<path d="M380 575H404M412 575H436M445 575H469M472 575H502" stroke="#76b9ed" stroke-width="1" opacity=".7"/>
<path d="M854 565.500L857.500 562L861 565.500" fill="none" stroke="#ddd"/>
<rect x="870" y="560.500" width="7" height="5.500" fill="#ddd"/><path d="M867 560L870 562" stroke="#ddd"/>
<path d="M884 567L892 559V567Z" fill="none" stroke="#999" stroke-width=".8"/>
<path d="M899 561.500H901L903 559.500V567L901 565H899ZM905 561C906 562.500 906 564 905 565.500M906.500 560C908 562 908 565 906.500 567" fill="none" stroke="#ccc" stroke-width=".8"/>
<rect x="915" y="560" width="6" height="5" rx="2" fill="none" stroke="#ccc"/><path d="M918 558V559M915 568H921" stroke="#ccc"/>
<text x="938" y="566.500" text-anchor="middle" style="font-size:7.500px;fill:#ddd">VIE</text>
<text x="969" y="559.500" text-anchor="middle" style="font-size:7.500px;fill:#e6e6e6">5:23 PM</text>
<text x="969" y="571" text-anchor="middle" style="font-size:7.500px;fill:#e6e6e6">9/30/2021</text>
<path d="M998 558.500H1008V566.500H1005L1003 568.500L1002 566.500H998Z" fill="none" stroke="#ddd"/>
<path d="M1021.500 550V576" stroke="#2a3550"/>
</svg>
<div class="wheel"></div>
<div class="sv"></div>
<svg class="over" width="1024" height="576" viewBox="0 0 1024 576" style="pointer-events:none">
<circle cx="165.500" cy="112" r="3.500" fill="none" stroke="#fff" stroke-width="1.800"/>
<path d="M131.500 145A4 4 0 0 1 139.500 145" fill="none" stroke="#fff" stroke-width="1.500"/>
</svg>
</div></body></html>
